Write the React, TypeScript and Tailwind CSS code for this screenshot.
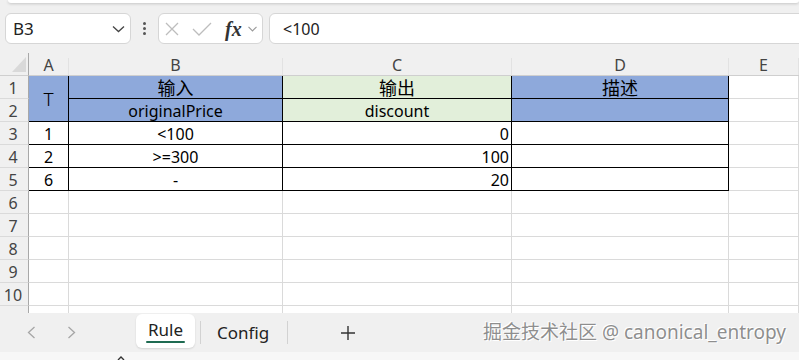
import React from "react";

const FONT = { fontFamily: '"Noto Sans", "Noto Sans CJK SC", sans-serif' };

type CellProps = {
  children?: React.ReactNode;
  className?: string;
};

function Cell({ children, className = "" }: CellProps) {
  return (
    <div className={`flex items-center overflow-hidden whitespace-nowrap border-b border-r pt-[2px] text-[16px] leading-[20px] text-black ${className}`}>
      {children}
    </div>
  );
}

function RowHead({ n }: { n: number }) {
  return (
    <div className="flex items-center justify-center border-b border-r border-b-[#dadada] border-r-[#a8a8a8] bg-[#f0f0f0] pr-[2px] pt-[2px] text-[16px] text-[#444]">
      {n}
    </div>
  );
}

const dark = "border-black";
const grid = "border-[#dadada] bg-white";

export default function App() {
  const cols = ["A", "B", "C", "D", "E"];
  const body = [
    { n: 3, a: "1", b: "<100", c: "0" },
    { n: 4, a: "2", b: ">=300", c: "100" },
    { n: 5, a: "6", b: "-", c: "20" },
  ];

  return (
    <div className="flex h-[360px] w-[799px] flex-col overflow-hidden bg-[#f0f0f0]" style={FONT}>
      {/* ribbon edge */}
      <div className="ml-2 h-[3px] rounded-b-lg bg-white shadow-[0_1px_3px_rgba(0,0,0,0.18)]" />

      {/* formula bar */}
      <div className="mt-[10px] flex h-[31px] items-stretch pl-[5px]">
        <div className="flex w-[126px] items-center justify-between rounded-md border border-[#d6d6d6] bg-white pl-[7px] pr-[5px] text-[17px] text-[#222]">
          <span>B3</span>
          <svg width="13" height="8" viewBox="0 0 13 8" fill="none" stroke="#444" strokeWidth="1.3">
            <path d="M1 1.5 L6.5 6.5 L12 1.5" />
          </svg>
        </div>
        <div className="flex w-[27px] flex-col items-center justify-center gap-[2px]">
          <span className="h-[3px] w-[3px] rounded-full bg-[#555]" />
          <span className="h-[3px] w-[3px] rounded-full bg-[#555]" />
          <span className="h-[3px] w-[3px] rounded-full bg-[#555]" />
        </div>
        <div className="flex w-[105px] items-center rounded-md border border-[#d6d6d6] bg-white pl-[5px]">
          <svg width="16" height="16" viewBox="0 0 16 16" fill="none" stroke="#bdbdbd" strokeWidth="1.3">
            <path d="M2 2 L14 14 M14 2 L2 14" />
          </svg>
          <svg className="ml-[12px]" width="20" height="14" viewBox="0 0 20 14" fill="none" stroke="#bdbdbd" strokeWidth="1.3">
            <path d="M1 7 L7 13 L19 1" />
          </svg>
          <span
            className="ml-[13px] text-[20px] italic leading-none text-[#333]"
            style={{ fontFamily: '"Liberation Serif", "DejaVu Serif", serif', fontWeight: 600 }}
          >
            fx
          </span>
          <svg className="ml-[6px]" width="9" height="6" viewBox="0 0 9 6" fill="none" stroke="#999" strokeWidth="1.1">
            <path d="M0.5 0.8 L4.5 5 L8.5 0.8" />
          </svg>
        </div>
        <div className="-mr-3 ml-[6px] flex flex-1 items-center rounded-md border border-[#d6d6d6] bg-white pl-[13px] text-[16px] text-[#222]">
          &lt;100
        </div>
      </div>

      {/* sheet */}
      <div className="mt-[9px] h-[260px] overflow-hidden bg-white">
        <div className="grid auto-rows-[23px] grid-cols-[29px_40px_214px_229px_217px_70px]">
          {/* column headers */}
          <div className="relative border-b border-r border-b-[#cfcfcf] border-r-[#a8a8a8] bg-[#f0f0f0]">
            <svg className="absolute left-[12px] top-[4px]" width="14" height="15" viewBox="0 0 14 15">
              <polygon points="14,0 14,15 0,15" fill="#d9d9d9" />
            </svg>
          </div>
          {cols.map((c) => (
            <div key={c} className="flex items-center justify-center border-b border-b-[#cfcfcf] bg-[#f0f0f0] pt-[2px] text-[16px] text-[#444]">
              <span className="flex-1 text-center">{c}</span>
              <span className="mt-[4px] h-[17px] w-px self-end bg-[#e2e2e2]" />
            </div>
          ))}

          {/* row 1 */}
          <RowHead n={1} />
          <div className={`row-span-2 flex items-center justify-center border-b border-r bg-[#8ea9db] pt-[2px] text-[19px] font-light ${dark}`}>T</div>
          <Cell className={`justify-center bg-[#8ea9db] text-[18px] ${dark}`}>输入</Cell>
          <Cell className={`justify-center bg-[#e2efda] text-[18px] ${dark}`}>输出</Cell>
          <Cell className={`justify-center bg-[#8ea9db] text-[18px] ${dark}`}>描述</Cell>
          <Cell className={grid} />

          {/* row 2 */}
          <RowHead n={2} />
          <Cell className={`justify-center bg-[#8ea9db] ${dark}`}>originalPrice</Cell>
          <Cell className={`justify-center bg-[#e2efda] ${dark}`}>discount</Cell>
          <Cell className={`bg-[#8ea9db] ${dark}`} />
          <Cell className={grid} />

          {body.map((r) => (
            <React.Fragment key={r.n}>
              <RowHead n={r.n} />
              <Cell className={`justify-center bg-white ${dark}`}>{r.a}</Cell>
              <Cell className={`justify-center bg-white ${dark}`}>{r.b}</Cell>
              <Cell className={`justify-end bg-white pr-[2px] ${dark}`}>{r.c}</Cell>
              <Cell className={`bg-white ${dark}`} />
              <Cell className={grid} />
            </React.Fragment>
          ))}

          {[6, 7, 8, 9, 10].map((n) => (
            <React.Fragment key={n}>
              <RowHead n={n} />
              <Cell className={grid} />
              <Cell className={grid} />
              <Cell className={grid} />
              <Cell className={grid} />
              <Cell className={grid} />
            </React.Fragment>
          ))}
          {/* partly hidden row 11 */}
          <div className="border-r border-r-[#a8a8a8] bg-[#f0f0f0]" />
          <Cell className={grid} />
          <Cell className={grid} />
          <Cell className={grid} />
          <Cell className={grid} />
          <Cell className={grid} />
        </div>
      </div>

      {/* sheet tabs */}
      <div className="relative flex h-[39px] items-center bg-[#f0f0f0]">
        <div className="flex w-[136px] items-center">
          <svg className="ml-[27px]" width="9" height="13" viewBox="0 0 9 13" fill="none" stroke="#a6a6a6" strokeWidth="1.3">
            <path d="M7.5 1 L1.5 6.5 L7.5 12" />
          </svg>
          <svg className="ml-[31px]" width="9" height="13" viewBox="0 0 9 13" fill="none" stroke="#a6a6a6" strokeWidth="1.3">
            <path d="M1.5 1 L7.5 6.5 L1.5 12" />
          </svg>
        </div>
        <div className="relative mb-[3px] flex h-[34px] w-[59px] items-center justify-center rounded-md bg-white pb-[3px] text-[17px] text-[#222] shadow-[0_1px_2px_rgba(0,0,0,0.12)]">
          Rule
          <span className="absolute left-[10px] top-[27px] h-[2px] w-[39px] rounded-full bg-[#1e6b52]" />
        </div>
        <span className="ml-[5px] h-[23px] w-px bg-[#d2d2d2]" />
        <span className="ml-[16px] text-[17px] text-[#222]">Config</span>
        <span className="ml-[18px] h-[23px] w-px bg-[#d2d2d2]" />
        <svg className="ml-[53px]" width="14" height="14" viewBox="0 0 14 14" fill="none" stroke="#333" strokeWidth="1.4">
          <path d="M7 0 V14 M0 7 H14" />
        </svg>

        <span
          className="absolute right-[13px] top-[7px] text-[19px] leading-[24px] text-[#8e8e8e]"
          style={{ textShadow: "0 0 1px #fff, 1px 1px 0 #fff, -1px -1px 0 #fff" }}
        >
          掘金技术社区 @ canonical_entropy
        </span>
      </div>

      {/* status strip */}
      <div className="relative h-[8px] bg-[#f7f7f7]">
        <svg className="absolute left-[117px] top-[4px]" width="8" height="4" viewBox="0 0 8 4" fill="none" stroke="#333" strokeWidth="1.4">
          <path d="M1 4 L4 1 L7 4" />
        </svg>
      </div>
    </div>
  );
}
